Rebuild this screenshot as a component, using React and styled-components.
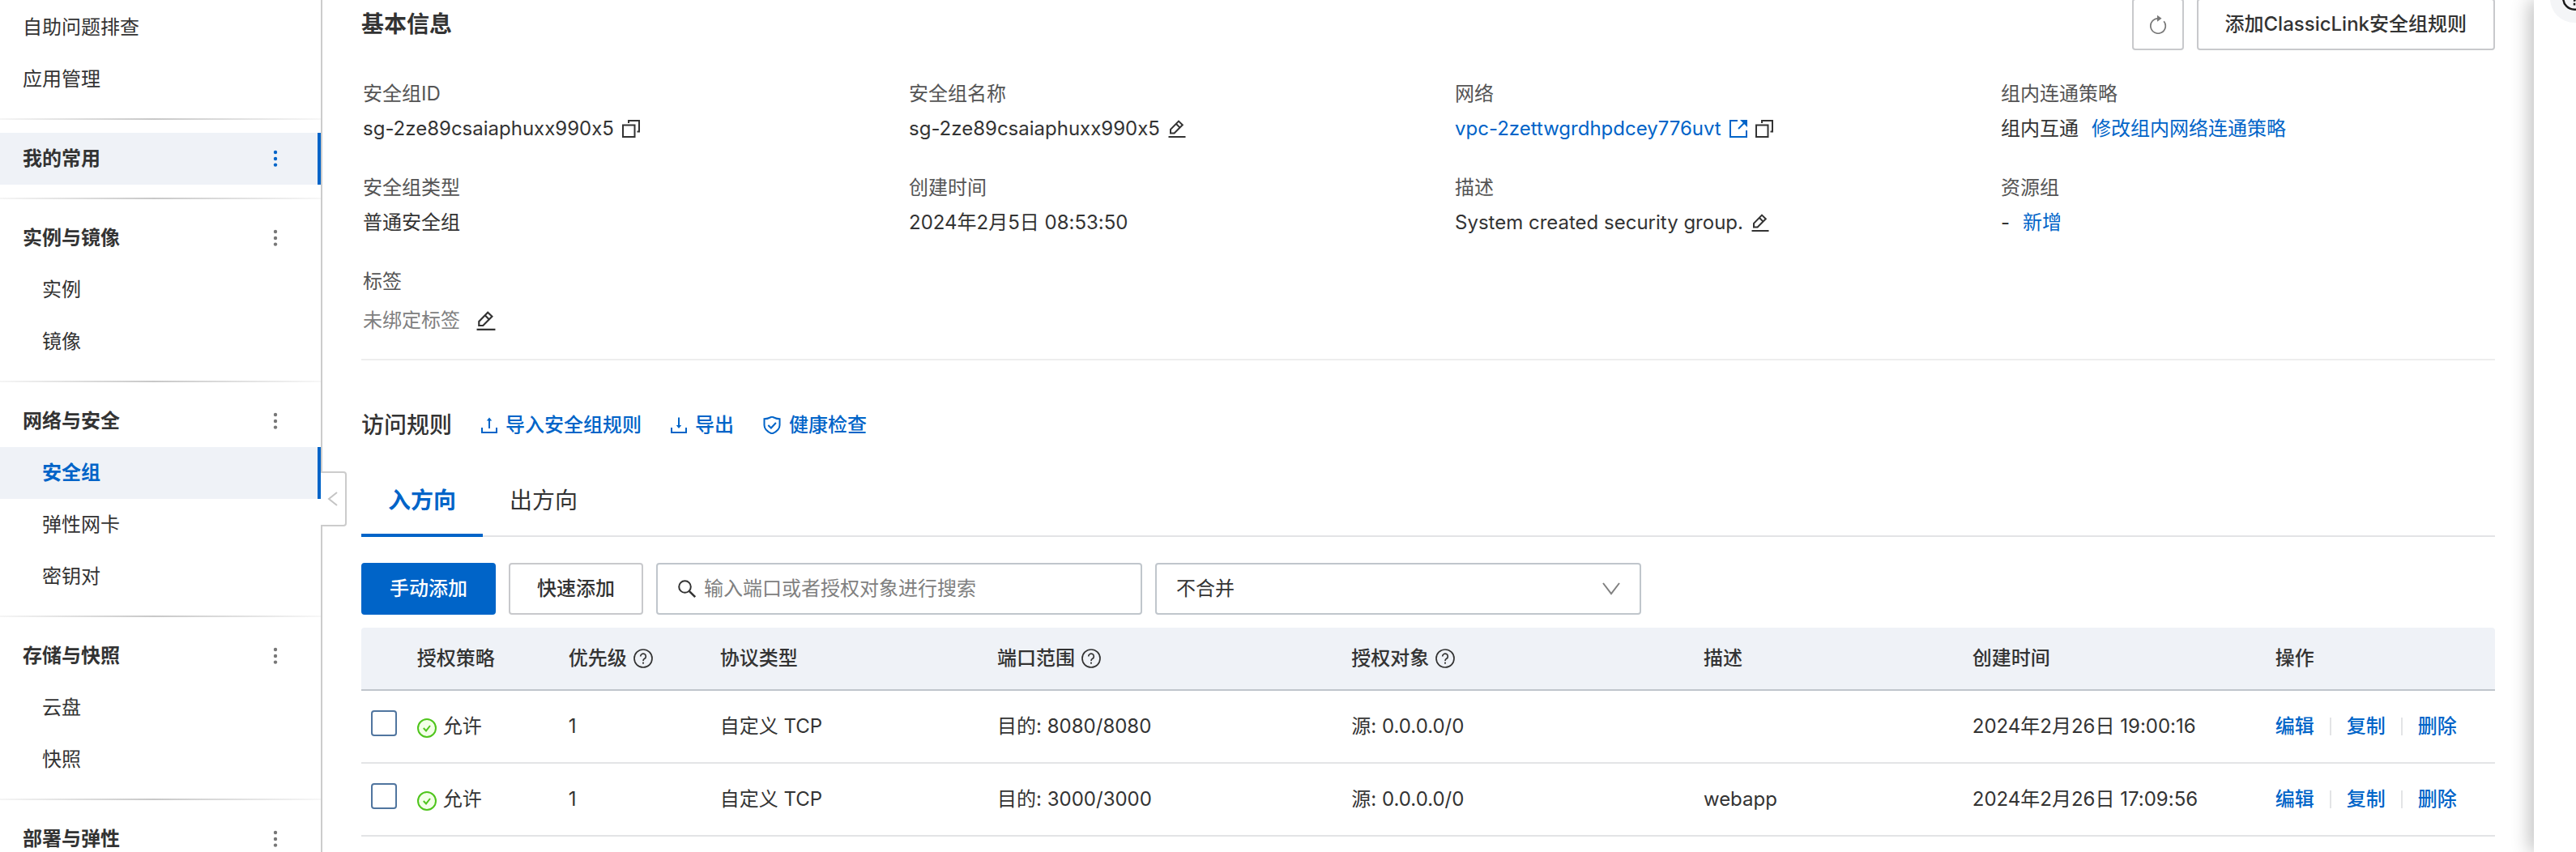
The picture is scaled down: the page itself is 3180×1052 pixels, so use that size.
import React from "react";
import styled, { createGlobalStyle, css } from "styled-components";

const blue = "#0064c8";
const ink = "#333333";

const GlobalStyle = createGlobalStyle`
  *, *::before, *::after { box-sizing: border-box; }
  body {
    margin: 0;
    background: #ffffff;
    color: ${ink};
    font-family: Inter, "Noto Sans CJK SC", sans-serif;
    font-size: 24px;
    line-height: 36px;
    font-feature-settings: "calt" 0;
  }
  button, input, select { font: inherit; color: inherit; margin: 0; }
  button { cursor: pointer; }
  a { color: ${blue}; text-decoration: none; }
  h2, ul, dl, dd, p { margin: 0; padding: 0; font: inherit; }
  svg { display: block; flex: none; }
`;

const Page = styled.div`
  display: flex;
  height: 100vh;
  overflow: hidden;
`;

const Sidebar = styled.nav`
  position: relative;
  flex: none;
  width: 398px;
  padding-top: 2px;
  border-right: 2px solid #cccccc;
`;

const NavGroup = styled.ul`
  list-style: none;
  & + &::before {
    content: "";
    display: block;
    height: 2px;
    margin: 16px 0;
    background: linear-gradient(90deg, #f5f5f5, #c8c8c8 48%, #f7f7f7);
  }
`;

const NavItem = styled.li`
  display: flex;
  align-items: center;
  justify-content: space-between;
  height: 64px;
  padding: 0 44px 0 28px;
  ${(p) => p.$nested && css`padding-left: 52px;`}
  ${(p) => p.$active && css`
    background: #eff2f7;
    border-right: 4px solid ${blue};
    padding-right: 40px;
  `}
`;

const NavLink = styled.a`
  color: ${(p) => (p.$current ? blue : ink)};
  font-weight: ${(p) => (p.$strong ? 600 : 400)};
`;

const IconButton = styled.button`
  display: flex;
  align-items: center;
  justify-content: center;
  padding: 0;
  border: 0;
  background: none;
  color: ${(p) => p.$color || ink};
`;

const CollapseButton = styled.button`
  position: absolute;
  top: 582px;
  left: 396px;
  z-index: 1;
  display: flex;
  align-items: center;
  justify-content: center;
  width: 32px;
  height: 68px;
  padding: 0;
  border: 2px solid #cccccc;
  border-left: 0;
  border-radius: 0 4px 4px 0;
  background: #ffffff;
  color: #c4c4c4;
`;

const Main = styled.main`
  flex: 1;
  min-width: 0;
  padding: 0 48px;
`;

const SideRail = styled.aside`
  position: relative;
  flex: none;
  width: 52px;
  background: #ffffff;
  box-shadow: -6px 0 22px rgba(0, 0, 0, 0.24);
`;

const HelpButton = styled.button`
  position: absolute;
  top: -32px;
  left: 20px;
  display: flex;
  align-items: center;
  justify-content: center;
  width: 60px;
  height: 60px;
  padding: 0;
  border: 0;
  border-radius: 50%;
  background: #f4f5f7;
  color: #1a1a1a;
`;

const SectionHeader = styled.header`
  display: flex;
  align-items: center;
  gap: 16px;
  height: 64px;
  margin-top: -2px;
`;

const Title = styled.h2`
  font-size: 28px;
  line-height: 40px;
  font-weight: ${(p) => (p.$strong ? 600 : 500)};
`;

const Spacer = styled.div`
  flex: 1;
`;

const Button = styled.button`
  display: flex;
  align-items: center;
  justify-content: center;
  min-width: 64px;
  height: 64px;
  padding: 0 ${(p) => (p.$square ? 0 : 33)}px;
  border: 2px solid ${(p) => (p.$primary ? blue : "#c8c9cc")};
  border-radius: 4px;
  background: ${(p) => (p.$primary ? blue : "#ffffff")};
  color: ${(p) => (p.$primary ? "#ffffff" : p.$muted ? "#777777" : ink)};
  font-weight: 500;
`;

const Details = styled.dl`
  display: grid;
  grid-template-columns: repeat(4, 1fr);
  gap: 34px 64px;
  margin-top: 36px;
  padding: 0 0 21px 2px;
  border-bottom: 2px solid #eeeeee;
`;

const Term = styled.dt`
  height: 40px;
  color: #555555;
`;

const Value = styled.dd`
  display: flex;
  align-items: center;
  gap: ${(p) => p.$gap || 10}px;
  height: ${(p) => p.$height || 42}px;
  color: ${(p) => p.$color || ink};
`;

const RulesHeader = styled.header`
  display: flex;
  align-items: center;
  gap: 36px;
  height: 64px;
  margin-top: 48px;
`;

const ActionLink = styled.a`
  display: flex;
  align-items: center;
  gap: 10px;
  font-weight: ${(p) => (p.$plain ? 400 : 500)};
`;

const TabList = styled.div`
  display: flex;
  height: 106px;
  border-bottom: 2px solid #e3e4e6;
`;

const Tab = styled.button`
  height: 106px;
  padding: 20px 33px 0;
  border: 0;
  border-bottom: 4px solid ${(p) => (p.$active ? blue : "transparent")};
  background: none;
  color: ${(p) => (p.$active ? blue : ink)};
  font-size: 28px;
  font-weight: ${(p) => (p.$active ? 600 : 400)};
`;

const Toolbar = styled.div`
  display: flex;
  gap: 16px;
  margin: 32px 0 16px;
`;

const Field = styled.label`
  display: flex;
  align-items: center;
  gap: 9px;
  width: 600px;
  height: 64px;
  padding: 0 24px;
  border: 2px solid #c0c6cc;
  border-radius: 4px;
  color: ${(p) => p.$color || ink};
`;

const SearchInput = styled.input`
  flex: 1;
  min-width: 0;
  padding: 0;
  border: 0;
  outline: 0;
  background: none;
  &::placeholder { color: #808080; opacity: 1; }
`;

const Select = styled.select`
  flex: 1;
  padding: 0;
  border: 0;
  outline: 0;
  appearance: none;
  background: none;
  color: ${ink};
`;

const Table = styled.table`
  width: 100%;
  table-layout: fixed;
  border-collapse: separate;
  border-spacing: 0;
`;

const HeadCell = styled.th`
  width: ${(p) => p.$width};
  height: 78px;
  padding: 0 16px;
  border-bottom: 2px solid #c0c6cc;
  background: #eff2f7;
  font-weight: 500;
  text-align: left;
  &:first-child { border-top-left-radius: 4px; }
  &:last-child { border-top-right-radius: 4px; }
`;

const Cell = styled.td`
  height: 90px;
  padding: 0 16px;
  border-bottom: 2px solid #e3e4e6;
  white-space: nowrap;
`;

const CheckCell = styled(Cell)`
  padding: 0 0 8px 12px;
`;

const Checkbox = styled.input`
  display: block;
  appearance: none;
  width: 32px;
  height: 32px;
  margin: 0;
  border: 2px solid #50759f;
  border-radius: 4px;
  background: #ffffff;
`;

const Inline = styled.span`
  display: flex;
  align-items: center;
  gap: 8px;
`;

const RowActions = styled.div`
  display: flex;
  align-items: center;
  font-weight: 500;
  a + a {
    display: flex;
    align-items: center;
  }
  a + a::before {
    content: "";
    width: 2px;
    height: 22px;
    margin: 0 19px;
    background: #e3e4e6;
  }
`;

const Svg = ({ size = 24, box = 24, width = 2, children }) => (
  <svg width={size} height={size} viewBox={`0 0 ${box} ${box}`} fill="none" stroke="currentColor" strokeWidth={width} aria-hidden="true">
    {children}
  </svg>
);

const DotsIcon = () => (
  <svg width="24" height="24" viewBox="0 0 24 24" fill="currentColor" aria-hidden="true">
    <circle cx="12" cy="4" r="2.2" />
    <circle cx="12" cy="12" r="2.2" />
    <circle cx="12" cy="19.6" r="2.2" />
  </svg>
);
const CopyIcon = () => (
  <Svg size={22} box={22}>
    <path d="M1 6.5h14.5V21H1zM8 4V1h13v13.500h-2.500" />
  </Svg>
);
const EditIcon = ({ size = 22 }) => (
  <Svg size={size} box={22}>
    <path d="M0.5 21h21M3 16.5v-4.6L13 1.6l4.8 4.6L7.6 16.5zM10 5l4.6 4.6" />
  </Svg>
);
const ExternalIcon = () => (
  <Svg size={22} box={22}>
    <path d="M10 1H1v20h20v-8M20.500 1.500L11 11" />
    <path d="M13 0h9v9z" fill="currentColor" stroke="none" />
  </Svg>
);
const RefreshIcon = () => (
  <Svg width={1.7}>
    <path d="M19.200 8.200A9.200 9.200 0 1 1 12 4.800" />
    <path d="M11 0.800l5.500 4-5.500 4z" fill="currentColor" stroke="none" />
  </Svg>
);
const ImportIcon = () => (
  <Svg size={20} box={20}>
    <path d="M1 13v6h18v-6M10 3v11" />
    <path d="M10 0.500l3.200 4H6.800z" fill="currentColor" stroke="none" />
  </Svg>
);
const ExportIcon = () => (
  <Svg size={20} box={20}>
    <path d="M1 13v6h18v-6M10 0.500v11" />
    <path d="M10 14l3.200-4H6.800z" fill="currentColor" stroke="none" />
  </Svg>
);
const ShieldIcon = () => (
  <Svg size={22} box={22}>
    <path d="M11 0.500c3 1.600 5.500 2.600 9.500 2.800v7.700c0 4.500-4 8.200-9.500 10.500C5.500 19.200 1.500 15.500 1.500 11V3.300C5.500 3.100 8 2.100 11 0.500z" />
    <path d="M6.300 11l3.600 3.500 6-6.500" />
  </Svg>
);
const SearchIcon = () => (
  <Svg>
    <circle cx="9.500" cy="9.500" r="7.300" />
    <path d="M14.800 14.800l7.400 7.400" strokeWidth="2.600" />
  </Svg>
);
const HelpIcon = ({ size = 24, width = 1.7 }) => (
  <Svg size={size} width={width}>
    <circle cx="12" cy="12" r="11" />
    <path d="M8.700 9.500a3.300 3.300 0 1 1 5 2.800c-1.200.7-1.700 1.300-1.700 2.700M12 16.500v2.200" />
  </Svg>
);
const AllowIcon = () => (
  <svg width="24" height="24" viewBox="0 -2 24 24" overflow="visible" fill="none" stroke="#4fc51c" strokeWidth="2" aria-hidden="true">
    <circle cx="12" cy="12" r="11" fill="#f3ffe8" />
    <path d="M7.800 12l3.200 3.400 5-6.400" />
  </svg>
);
const ChevronDown = () => (
  <Svg size={22} box={22}>
    <path d="M1 4l10 13L21 4" />
  </Svg>
);
const ChevronLeft = () => (
  <Svg size={18} box={18}>
    <path d="M14 1L4 9l10 8" />
  </Svg>
);

const groups = [
  { items: ["自助问题排查", "应用管理"] },
  { title: "我的常用", active: true, items: [] },
  { title: "实例与镜像", items: ["实例", "镜像"] },
  { title: "网络与安全", items: ["安全组", "弹性网卡", "密钥对"], current: "安全组" },
  { title: "存储与快照", items: ["云盘", "快照"] },
  { title: "部署与弹性", items: [] },
];

const columns = [
  { width: "2%", label: "" },
  { width: "7.1%", label: "授权策略" },
  { width: "7.1%", label: "优先级", help: true },
  { width: "13%", label: "协议类型" },
  { width: "16.6%", label: "端口范围", help: true },
  { width: "16.5%", label: "授权对象", help: true },
  { width: "12.6%", label: "描述" },
  { width: "14.2%", label: "创建时间" },
  { width: "10.9%", label: "操作" },
];

const rules = [
  { port: "8080/8080", note: "", time: "2024年2月26日 19:00:16" },
  { port: "3000/3000", note: "webapp", time: "2024年2月26日 17:09:56" },
];

export default function App() {
  return (
    <Page>
      <GlobalStyle />
      <Sidebar>
        {groups.map((group, index) => (
          <NavGroup key={index}>
            {group.title && (
              <NavItem $active={group.active}>
                <NavLink href="#" $strong>{group.title}</NavLink>
                <IconButton aria-label="更多" $color={group.active ? blue : "#777777"}><DotsIcon /></IconButton>
              </NavItem>
            )}
            {group.items.map((item) => (
              <NavItem key={item} $nested={Boolean(group.title)} $active={item === group.current}>
                <NavLink href="#" $current={item === group.current} $strong={item === group.current}>{item}</NavLink>
              </NavItem>
            ))}
          </NavGroup>
        ))}
        <CollapseButton aria-label="收起"><ChevronLeft /></CollapseButton>
      </Sidebar>

      <Main>
        <SectionHeader>
          <Title $strong>基本信息</Title>
          <Spacer />
          <Button $square $muted aria-label="刷新"><RefreshIcon /></Button>
          <Button>添加ClassicLink安全组规则</Button>
        </SectionHeader>

        <Details>
          <div>
            <Term>安全组ID</Term>
            <Value>sg-2ze89csaiaphuxx990x5<IconButton aria-label="复制"><CopyIcon /></IconButton></Value>
          </div>
          <div>
            <Term>安全组名称</Term>
            <Value>sg-2ze89csaiaphuxx990x5<IconButton aria-label="编辑"><EditIcon /></IconButton></Value>
          </div>
          <div>
            <Term>网络</Term>
            <Value>
              <ActionLink href="#" $plain>vpc-2zettwgrdhpdcey776uvt<ExternalIcon /></ActionLink>
              <IconButton aria-label="复制"><CopyIcon /></IconButton>
            </Value>
          </div>
          <div>
            <Term>组内连通策略</Term>
            <Value $gap={16}>组内互通<a href="#">修改组内网络连通策略</a></Value>
          </div>
          <div>
            <Term>安全组类型</Term>
            <Value>普通安全组</Value>
          </div>
          <div>
            <Term>创建时间</Term>
            <Value>2024年2月5日 08:53:50</Value>
          </div>
          <div>
            <Term>描述</Term>
            <Value>System created security group.<IconButton aria-label="编辑"><EditIcon /></IconButton></Value>
          </div>
          <div>
            <Term>资源组</Term>
            <Value $gap={16}>-<a href="#">新增</a></Value>
          </div>
          <div>
            <Term>标签</Term>
            <Value $gap={20} $height={52} $color="#808080">未绑定标签<IconButton aria-label="编辑标签"><EditIcon size={24} /></IconButton></Value>
          </div>
        </Details>

        <RulesHeader>
          <Title>访问规则</Title>
          <ActionLink href="#"><ImportIcon />导入安全组规则</ActionLink>
          <ActionLink href="#"><ExportIcon />导出</ActionLink>
          <ActionLink href="#"><ShieldIcon />健康检查</ActionLink>
        </RulesHeader>

        <TabList role="tablist">
          <Tab role="tab" aria-selected="true" $active>入方向</Tab>
          <Tab role="tab" aria-selected="false">出方向</Tab>
        </TabList>

        <Toolbar>
          <Button $primary>手动添加</Button>
          <Button>快速添加</Button>
          <Field>
            <SearchIcon />
            <SearchInput type="text" aria-label="搜索" placeholder="输入端口或者授权对象进行搜索" />
          </Field>
          <Field $color="#808080">
            <Select aria-label="合并方式"><option>不合并</option></Select>
            <ChevronDown />
          </Field>
        </Toolbar>

        <Table>
          <thead>
            <tr>
              {columns.map((column, index) => (
                <HeadCell key={index} $width={column.width}>
                  <Inline>{column.label}{column.help && <HelpIcon />}</Inline>
                </HeadCell>
              ))}
            </tr>
          </thead>
          <tbody>
            {rules.map((rule) => (
              <tr key={rule.port}>
                <CheckCell><Checkbox type="checkbox" aria-label={`选择 ${rule.port}`} /></CheckCell>
                <Cell><Inline><AllowIcon />允许</Inline></Cell>
                <Cell>1</Cell>
                <Cell>自定义 TCP</Cell>
                <Cell>目的: {rule.port}</Cell>
                <Cell>源: 0.0.0.0/0</Cell>
                <Cell>{rule.note}</Cell>
                <Cell>{rule.time}</Cell>
                <Cell>
                  <RowActions>
                    <a href="#">编辑</a>
                    <a href="#">复制</a>
                    <a href="#">删除</a>
                  </RowActions>
                </Cell>
              </tr>
            ))}
          </tbody>
        </Table>
      </Main>

      <SideRail>
        <HelpButton aria-label="帮助"><HelpIcon size={30} width={2} /></HelpButton>
      </SideRail>
    </Page>
  );
}
